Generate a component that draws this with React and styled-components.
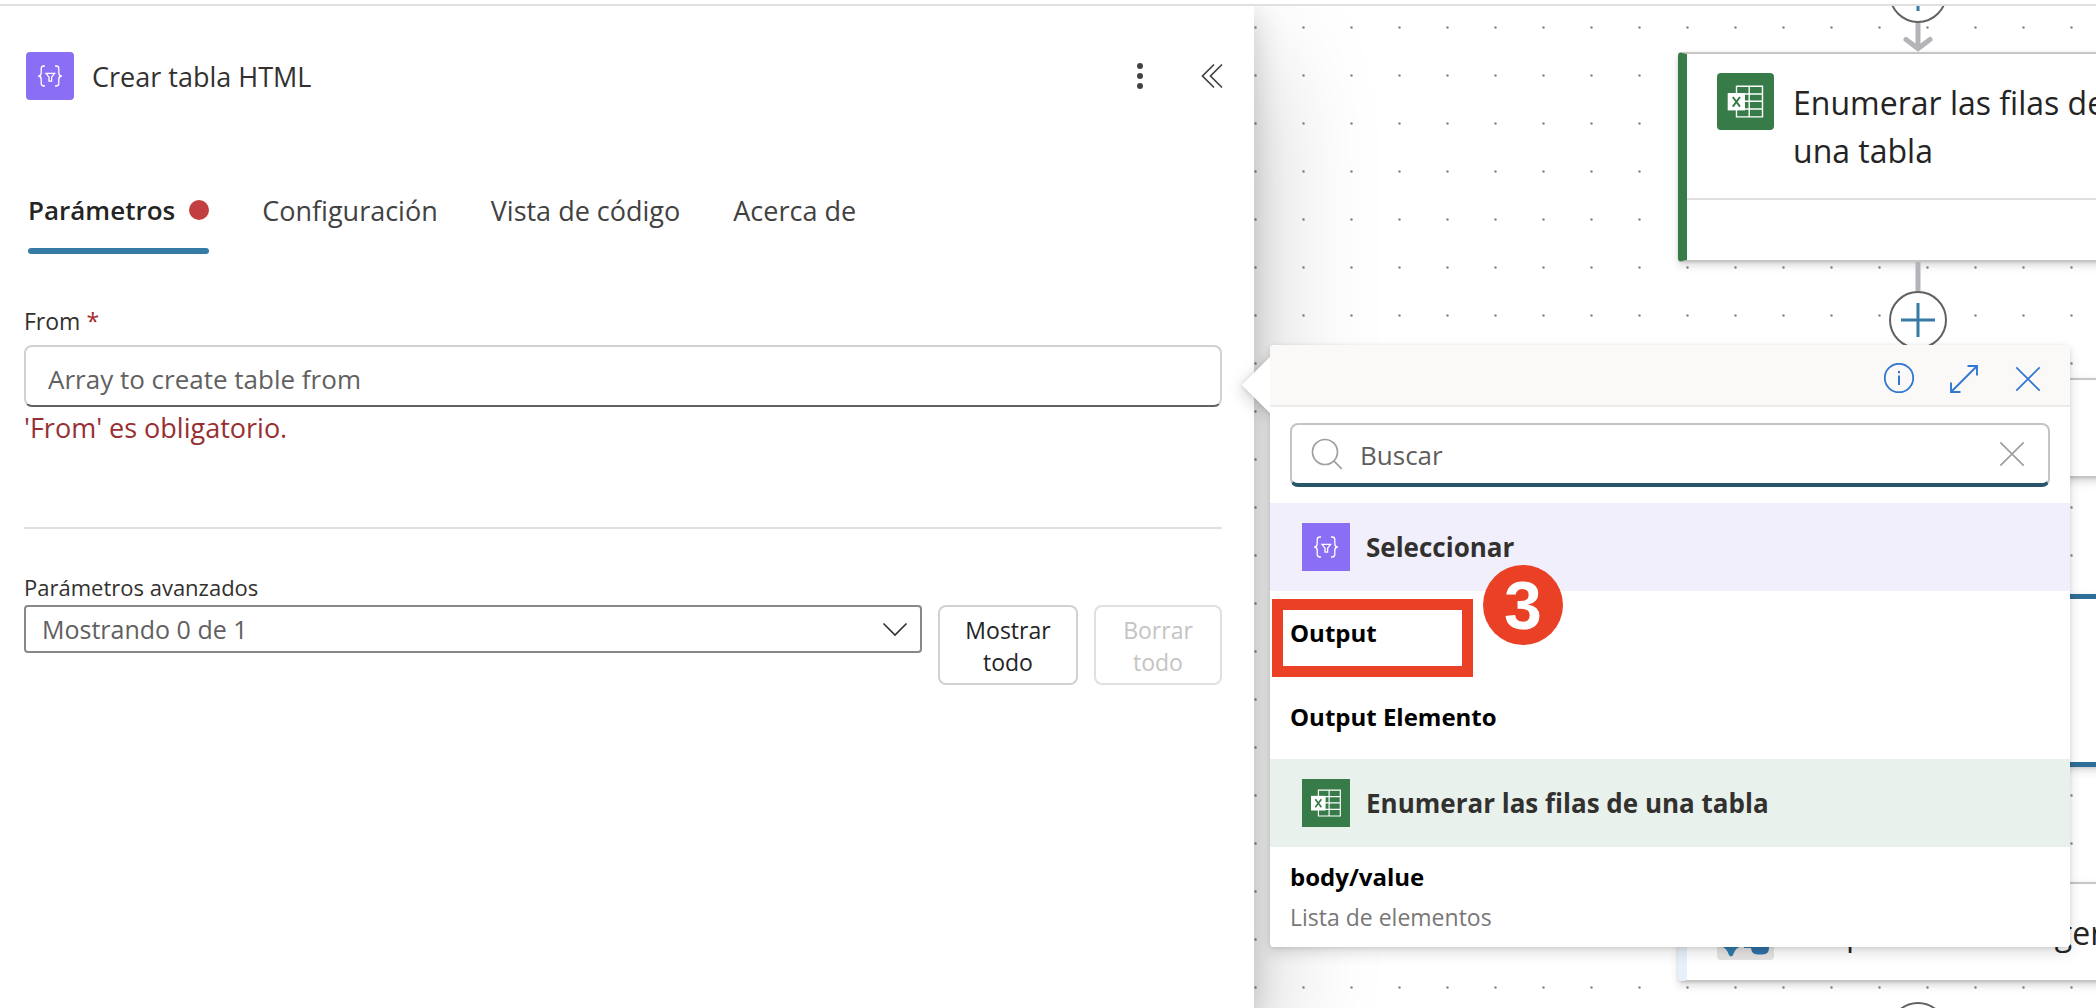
import React from "react";
import styled, { createGlobalStyle } from "styled-components";

const GlobalStyle = createGlobalStyle`
  *, *::before, *::after { box-sizing: border-box; }
  body {
    margin: 0;
    overflow: hidden;
    background: #fff;
    color: #323130;
    font-family: "Segoe UI", "Open Sans", "Noto Sans", sans-serif;
  }
  button, input, select { font: inherit; color: inherit; margin: 0; }
  h1, h2, p, ul { margin: 0; padding: 0; font: inherit; }
  ul { list-style: none; }
  svg { display: block; flex: none; }
`;

const Page = styled.div`
  display: flex;
  flex-direction: column;
  height: 100vh;
`;

const TopEdge = styled.div`
  flex: none;
  height: 6px;
  border-bottom: 2px solid #e0e0e0;
`;

const Workspace = styled.main`
  flex: 1;
  min-height: 0;
  display: flex;
  overflow: hidden;
`;

/* ---------- side panel ---------- */

const Panel = styled.section`
  position: relative;
  z-index: 2;
  flex: 0 0 1254px;
  background: #fff;
  box-shadow: 0 51px 115px rgba(0, 0, 0, 0.22), 0 10px 29px rgba(0, 0, 0, 0.18);
`;

const PanelHeader = styled.header`
  display: flex;
  align-items: center;
  gap: 18px;
  padding: 46px 10px 0 26px;
`;

const IconTile = styled.span`
  display: flex;
  flex: none;
  overflow: hidden;
  border-radius: ${(p) => p.$radius || 0}px;
`;

const PanelTitle = styled.h1`
  flex: 1;
  padding-top: 2px;
  font-size: 27px;
  line-height: 40px;
  color: #323130;
`;

const HeaderActions = styled.div`
  display: flex;
  gap: 8px;
`;

const IconButton = styled.button`
  display: flex;
  align-items: center;
  justify-content: center;
  width: ${(p) => p.$width || 64}px;
  height: 48px;
  padding: 0;
  border: 0;
  background: transparent;
  color: ${(p) => p.$color || "#424242"};
`;

const TabList = styled.div`
  display: flex;
  gap: 53px;
  margin-top: 72px;
  padding-left: 28px;
`;

const Tab = styled.button`
  display: flex;
  flex-direction: column;
  padding: 0;
  border: 0;
  background: transparent;
  font-size: ${(p) => (p.$active ? 26 : 27)}px;
  font-weight: ${(p) => (p.$active ? 600 : 400)};
  color: ${(p) => (p.$active ? "#242424" : "#424242")};
  &::after {
    content: "";
    width: 100%;
    height: 6px;
    border-radius: 3px;
    background: ${(p) => (p.$active ? "#367ba6" : "transparent")};
  }
`;

const TabLabel = styled.span`
  display: flex;
  align-items: center;
  gap: 14px;
  height: 76px;
`;

const ErrorDot = styled.span`
  width: 20px;
  height: 20px;
  border-radius: 50%;
  background: #c23f3f;
`;

const PanelBody = styled.div`
  padding: 51px 32px 0 24px;
`;

const Label = styled.label`
  display: block;
  font-size: ${(p) => p.$size || 23}px;
  line-height: 32px;
  color: #323130;
`;

const Required = styled.span`
  color: #a4262c;
`;

const FieldBox = styled.div`
  position: relative;
  margin-top: 8px;
`;

const TextInput = styled.input`
  display: block;
  width: 100%;
  height: 62px;
  padding: 6px 22px 0;
  border: 2px solid #d1d1d1;
  border-bottom-color: #616161;
  border-radius: 8px;
  outline: 0;
  background: #fff;
  font-size: 26px;
  &::placeholder { color: #616161; opacity: 1; }
`;

const ErrorText = styled.p`
  font-size: 27px;
  line-height: 42px;
  color: #973033;
`;

const Divider = styled.hr`
  height: 2px;
  margin: 78px 0 42px;
  border: 0;
  background: #e0e0e0;
`;

const AdvancedRow = styled.div`
  display: flex;
  align-items: flex-start;
  gap: 16px;
  margin-top: 2px;
`;

const SelectWrap = styled.div`
  flex: 1;
  display: grid;
  align-items: center;
  > * { grid-area: 1 / 1; }
  > svg {
    justify-self: end;
    margin-right: 14px;
    pointer-events: none;
  }
`;

const Select = styled.select`
  appearance: none;
  width: 100%;
  height: 48px;
  padding: 0 16px;
  border: 2px solid #8a8886;
  border-radius: 4px;
  background: #fff;
  color: #616161;
  font-size: 25px;
  line-height: 40px;
`;

const OutlineButton = styled.button`
  width: ${(p) => p.$width}px;
  padding: 7px 20px 5px;
  border: 2px solid #d1d1d1;
  border-radius: 8px;
  background: #fff;
  color: #242424;
  font-size: 23px;
  line-height: 32px;
  &:disabled { color: #c4c4c4; border-color: #e0e0e0; }
`;

/* ---------- dynamic content callout ---------- */

const Callout = styled.aside`
  position: absolute;
  top: 0;
  left: calc(100% + 48px);
  width: 800px;
  border-radius: 4px;
  box-shadow: 0 6px 14px rgba(0, 0, 0, 0.13), 0 1px 4px rgba(0, 0, 0, 0.11);
`;

const CalloutBeak = styled.span`
  position: absolute;
  top: 20px;
  left: -20px;
  width: 40px;
  height: 40px;
  transform: rotate(45deg);
  background: #fff;
  box-shadow: 0 6px 14px rgba(0, 0, 0, 0.13), 0 1px 4px rgba(0, 0, 0, 0.11);
`;

const CalloutSurface = styled.div`
  position: relative;
  overflow: hidden;
  border-radius: 4px;
  background: #fff;
`;

const CalloutHeader = styled.header`
  display: flex;
  justify-content: flex-end;
  align-items: center;
  height: 62px;
  padding: 8px 10px 0;
  border-bottom: 2px solid #edebe9;
  background: #faf9f8;
`;

const SearchBox = styled.div`
  display: flex;
  align-items: center;
  height: 64px;
  margin: 16px 20px;
  padding-left: 19px;
  border: 2px solid #c4c4c4;
  border-bottom: 4px solid #28556a;
  border-radius: 8px;
  color: #a19f9d;
`;

const SearchInput = styled.input`
  flex: 1;
  min-width: 0;
  height: 56px;
  padding: 2px 0 0 17px;
  border: 0;
  outline: 0;
  background: transparent;
  font-size: 26px;
  &::placeholder { color: #605e5c; opacity: 1; }
`;

const GroupHeader = styled.h2`
  display: flex;
  align-items: center;
  gap: 16px;
  height: 88px;
  padding-left: 32px;
  background: ${(p) => p.$tint};
  color: #323130;
  font-size: 26px;
  font-weight: 700;
`;

const TokenButton = styled.button`
  display: flex;
  flex-direction: column;
  justify-content: center;
  width: 100%;
  min-height: 84px;
  padding: 10px 20px;
  border: 0;
  background: #fff;
  text-align: left;
  line-height: 40px;
`;

const TokenName = styled.span`
  color: #000;
  font-size: 24px;
  font-weight: 700;
`;

const TokenHint = styled.span`
  color: #797775;
  font-size: 23px;
`;

const Highlight = styled.span`
  position: absolute;
  top: 254px;
  left: 2px;
  width: 201px;
  height: 78px;
  border: 11px solid #ea4025;
  pointer-events: none;
`;

const StepBadge = styled.span`
  position: absolute;
  top: 220px;
  left: 213px;
  display: flex;
  align-items: center;
  justify-content: center;
  width: 80px;
  height: 80px;
  border-radius: 50%;
  background: #ea4025;
  color: #fff;
  font: 700 68px/80px "Liberation Sans", Arial, sans-serif;
`;

/* ---------- flow canvas ---------- */

const Canvas = styled.section`
  position: relative;
  flex: 1;
  min-width: 0;
  overflow: hidden;
  background: #fff radial-gradient(circle at 1.5px 1.5px, #808080 0.5px, transparent 1.8px)
    0 20px / 48px 48px;
`;

const FlowCard = styled.article`
  position: absolute;
  left: 424px;
  top: ${(p) => p.$top}px;
  width: 480px;
  height: ${(p) => p.$height}px;
  border: ${(p) => (p.$selected ? "5px solid #2f6e96" : "2px solid #c8c6c4")};
  border-left: 9px solid ${(p) => p.$accent};
  border-radius: 4px;
  background: #fff;
  box-shadow: 0 4px 9px rgba(0, 0, 0, 0.13), 0 1px 3px rgba(0, 0, 0, 0.1);
`;

const CardHead = styled.div`
  display: flex;
  align-items: flex-start;
  gap: 19px;
  height: ${(p) => (p.$ruled ? "146px" : "auto")};
  padding: 19px 8px 0 30px;
  border-bottom: ${(p) => (p.$ruled ? "2px solid #e1dfdd" : 0)};
`;

const CardTitle = styled.h2`
  padding-top: 6px;
  color: #242424;
  font-size: 32px;
  line-height: 48px;
`;

const Wires = styled.svg`
  position: absolute;
  top: 0;
  left: 624px;
`;

/* ---------- icons ---------- */

function DataOperationIcon() {
  return (
    <svg width="48" height="48" viewBox="0 0 48 48" fill="none" stroke="#fff" strokeWidth="1.3">
      <rect width="48" height="48" fill="#8a6ff5" stroke="none" />
      <path d="M19 14h-1.2q-2.6 0-2.6 2.8v4q0 3.2-3 3.2q3 0 3 3.2v4q0 2.8 2.6 2.8H19" />
      <path d="M29 14h1.2q2.6 0 2.6 2.8v4q0 3.2 3 3.2q-3 0-3 3.2v4q0 2.8-2.6 2.8H29" />
      <path d="M20 21.3h8.6l-3 3.9v4h-2.6v-4z" />
    </svg>
  );
}

function ExcelIcon({ size }) {
  return (
    <svg width={size} height={size} viewBox="0 0 57 57" fill="none" stroke="#fff" strokeWidth="1.4">
      <rect width="57" height="57" fill="#377c48" stroke="none" />
      <path d="M19.5 13.3h26v30.6h-26zM32.2 13.3v30.6M19.5 21h26M19.5 28.3h26M19.5 36h26" />
      <rect x="10.7" y="20" width="17.3" height="17.4" fill="#fff" stroke="none" />
      <path d="M15.8 24l7.2 9.6M23 24l-7.2 9.6" stroke="#377c48" strokeWidth="2" />
    </svg>
  );
}

function AgentIcon() {
  return (
    <svg width="57" height="57" viewBox="0 0 57 57">
      <rect width="57" height="57" fill="#e6e4e3" />
      <path d="M3 18q0-6 6-6h10q6 0 6 6v25q-7 2-8.500 8q-2.500 5-5 0q-1.500-6-8.500-8z" fill="#2f7cae" />
      <path d="M27 20h19q6 0 6 6v19q0 6.500-6.500 6.500h-5q-6 0-6.500-6.500h-7z" fill="#3072a8" />
    </svg>
  );
}

function MoreIcon() {
  return (
    <svg width="8" height="28" viewBox="0 0 8 28" fill="currentColor">
      <circle cx="4" cy="4" r="3" />
      <circle cx="4" cy="14" r="3" />
      <circle cx="4" cy="24" r="3" />
    </svg>
  );
}

function CollapseIcon() {
  return (
    <svg width="24" height="26" viewBox="0 0 24 26" fill="none" stroke="currentColor" strokeWidth="1.7">
      <path d="M14 1.5L2.5 13L14 24.5M22 1.5L10.5 13L22 24.5" />
    </svg>
  );
}

function ChevronDownIcon() {
  return (
    <svg width="26" height="16" viewBox="0 0 26 16" fill="none" stroke="#323130" strokeWidth="1.6">
      <path d="M1.5 2.5L13 14L24.5 2.5" />
    </svg>
  );
}

function CrossIcon() {
  return (
    <svg width="26" height="26" viewBox="0 0 26 26" fill="none" stroke="currentColor" strokeWidth="1.7">
      <path d="M1.3 1.3l23.4 23.4M24.7 1.3L1.3 24.7" />
    </svg>
  );
}

function InfoIcon() {
  return (
    <svg width="32" height="32" viewBox="0 0 32 32" fill="none" stroke="currentColor" strokeWidth="1.8">
      <circle cx="15" cy="15" r="14.2" />
      <path d="M15 12.500v9.500M15 8v2.200" strokeWidth="2" />
    </svg>
  );
}

function ExpandIcon() {
  return (
    <svg width="30" height="30" viewBox="0 0 30 30" fill="none" stroke="currentColor" strokeWidth="1.9">
      <path d="M2 28L28 2M18.5 2H28v9.5M2 18.5V28h9.5" />
    </svg>
  );
}

function SearchIcon() {
  return (
    <svg width="32" height="32" viewBox="0 0 32 32" fill="none" stroke="currentColor" strokeWidth="1.7">
      <circle cx="14" cy="14" r="12.5" />
      <path d="M22.8 22.8l8 8" />
    </svg>
  );
}

function AddStep({ y }) {
  return (
    <g>
      <circle cx="40" cy={y} r="28" fill="#fff" stroke="#616161" strokeWidth="2" />
      <path d={`M23 ${y}h34M40 ${y - 17}v34`} stroke="#367ba6" strokeWidth="3" />
    </g>
  );
}

/* ---------- content ---------- */

const TABS = [
  { name: "Parámetros", active: true },
  { name: "Configuración" },
  { name: "Vista de código" },
  { name: "Acerca de" },
];

const GROUPS = [
  {
    name: "Seleccionar",
    tint: "#f2effc",
    icon: <DataOperationIcon />,
    tokens: [{ name: "Output" }, { name: "Output Elemento" }],
  },
  {
    name: "Enumerar las filas de una tabla",
    tint: "#e8f1ec",
    icon: <ExcelIcon size={48} />,
    tokens: [{ name: "body/value", hint: "Lista de elementos" }],
  },
];

function TokenPicker() {
  return (
    <Callout aria-label="Contenido dinámico">
      <CalloutBeak />
      <CalloutSurface>
        <CalloutHeader>
          <IconButton $color="#3277d1" aria-label="Información"><InfoIcon /></IconButton>
          <IconButton $color="#3277d1" aria-label="Expandir"><ExpandIcon /></IconButton>
          <IconButton $color="#3277d1" aria-label="Cerrar"><CrossIcon /></IconButton>
        </CalloutHeader>
        <SearchBox>
          <SearchIcon />
          <SearchInput type="text" placeholder="Buscar" aria-label="Buscar" />
          <IconButton $width={72} $color="#a19f9d" aria-label="Borrar búsqueda"><CrossIcon /></IconButton>
        </SearchBox>
        {GROUPS.map((group) => (
          <section key={group.name}>
            <GroupHeader $tint={group.tint}>
              <IconTile>{group.icon}</IconTile>
              {group.name}
            </GroupHeader>
            <ul>
              {group.tokens.map((token) => (
                <li key={token.name}>
                  <TokenButton>
                    <TokenName>{token.name}</TokenName>
                    {token.hint && <TokenHint>{token.hint}</TokenHint>}
                  </TokenButton>
                </li>
              ))}
            </ul>
          </section>
        ))}
        <Highlight />
        <StepBadge>3</StepBadge>
      </CalloutSurface>
    </Callout>
  );
}

function SettingsPanel() {
  return (
    <Panel>
      <PanelHeader>
        <IconTile $radius={4}><DataOperationIcon /></IconTile>
        <PanelTitle>Crear tabla HTML</PanelTitle>
        <HeaderActions>
          <IconButton aria-label="Más comandos"><MoreIcon /></IconButton>
          <IconButton aria-label="Contraer"><CollapseIcon /></IconButton>
        </HeaderActions>
      </PanelHeader>
      <TabList role="tablist">
        {TABS.map((tab) => (
          <Tab key={tab.name} role="tab" aria-selected={!!tab.active} $active={tab.active}>
            <TabLabel>
              {tab.name}
              {tab.active && <ErrorDot />}
            </TabLabel>
          </Tab>
        ))}
      </TabList>
      <PanelBody>
        <Label htmlFor="from">From <Required>*</Required></Label>
        <FieldBox>
          <TextInput id="from" type="text" placeholder="Array to create table from" />
          <TokenPicker />
        </FieldBox>
        <ErrorText>'From' es obligatorio.</ErrorText>
        <Divider />
        <Label htmlFor="advanced" $size={22}>Parámetros avanzados</Label>
        <AdvancedRow>
          <SelectWrap>
            <Select id="advanced">
              <option>Mostrando 0 de 1</option>
            </Select>
            <ChevronDownIcon />
          </SelectWrap>
          <OutlineButton $width={140}>Mostrar todo</OutlineButton>
          <OutlineButton $width={128} disabled>Borrar todo</OutlineButton>
        </AdvancedRow>
      </PanelBody>
    </Panel>
  );
}

function FlowCanvas() {
  return (
    <Canvas>
      <FlowCard $top={46} $height={210} $accent="#377c48">
        <CardHead $ruled>
          <IconTile $radius={4}><ExcelIcon size={57} /></IconTile>
          <CardTitle>Enumerar las filas de una tabla</CardTitle>
        </CardHead>
      </FlowCard>
      <FlowCard $top={372} $height={100} $accent="#8a6ff5" />
      <FlowCard $top={588} $height={173} $accent="#8a6ff5" $selected />
      <FlowCard $top={876} $height={100} $accent="#e6f1fb">
        <CardHead>
          <IconTile $radius={4}><AgentIcon /></IconTile>
          <CardTitle>Responder a un agente</CardTitle>
        </CardHead>
      </FlowCard>
      <Wires width="80" height="1060" viewBox="0 0 80 1060" fill="none">
        <g stroke="#b3b3b8" strokeWidth="5">
          <path d="M40 10v32M40 256v36" />
          <path d="M28 33.5l12 9l12-9" strokeLinecap="round" />
        </g>
        <AddStep y={-12} />
        <AddStep y={314} />
        <AddStep y={1025} />
      </Wires>
    </Canvas>
  );
}

export default function App() {
  return (
    <Page>
      <GlobalStyle />
      <TopEdge />
      <Workspace>
        <SettingsPanel />
        <FlowCanvas />
      </Workspace>
    </Page>
  );
}
